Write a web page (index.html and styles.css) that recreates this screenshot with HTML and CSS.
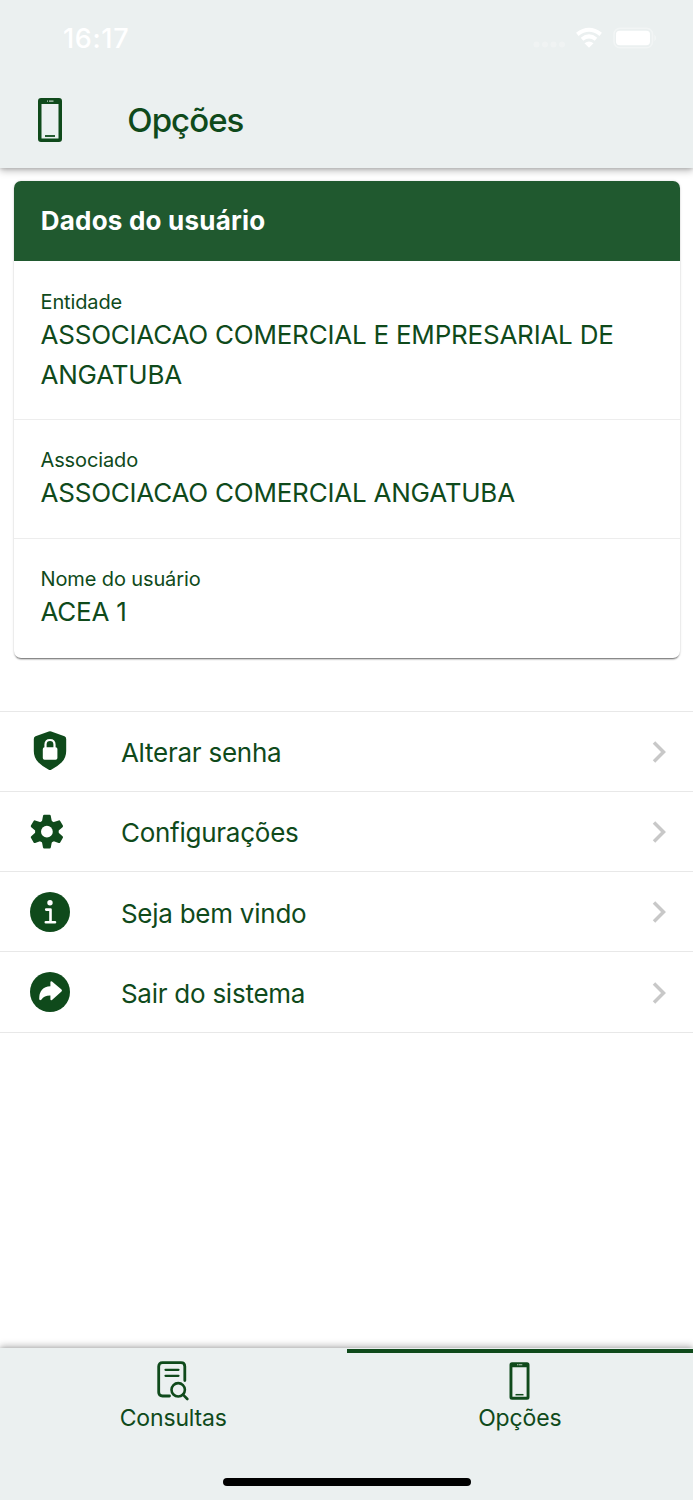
FILE: index.html
```html
<!DOCTYPE html>
<html lang="pt-BR">
<head>
<meta charset="utf-8">
<title>Opções</title>
<link rel="stylesheet" href="styles.css">
</head>
<body>
<div class="screen">
  <header class="header">
    <div class="status">
      <span class="clock">16:17</span>
      <svg class="status-icons" width="126" height="24" viewBox="0 0 126 24" fill="#fff">
        <g opacity=".25"><circle cx="6.500" cy="18.500" r="3"/><circle cx="15" cy="18.500" r="3"/><circle cx="23.500" cy="18.500" r="3"/><circle cx="32" cy="18.500" r="3"/></g>
        <g fill="none" stroke="#fff" stroke-width="4"><path d="M47.300 8.400Q59 -.8 70.700 8.400"/><path d="M52 13.200Q59 7.600 66 13.200"/></g>
        <path d="M54.500 17.200Q59 13.600 63.500 17.200L59 21.800Z"/>
        <rect x="84" y="2.300" width="38.500" height="19.400" rx="6" fill="none" stroke="#fff" stroke-width="1.600" opacity=".35"/>
        <rect x="86" y="4.800" width="34" height="14.400" rx="3.600"/>
        <path d="M124.500 8.500q3 3.500 0 7z" opacity=".4"/>
      </svg>
    </div>
    <div class="toolbar">
      <svg class="phone" width="24" height="44" viewBox="0 0 24 44"><path fill="#0f4a1b" fill-rule="evenodd" d="M3 0H21Q24 0 24 3V41Q24 44 21 44H3Q0 44 0 41V3Q0 0 3 0ZM3.500 6V40.500H20.500V6Z"/><path d="M7 38H17" stroke="#0f4a1b" stroke-width="1.800"/><path d="M9 3.200H10M11 3.200H15.500" stroke="#b9cbbd" stroke-width="1.300"/></svg>
      <h1 class="title">Opções</h1>
    </div>
  </header>

  <main class="content">
    <section class="card">
      <h2 class="card-title">Dados do usuário</h2>
      <div class="field field-tall"><div class="label">Entidade</div><div class="value">ASSOCIACAO COMERCIAL E EMPRESARIAL DE<br>ANGATUBA</div></div>
      <div class="field"><div class="label">Associado</div><div class="value">ASSOCIACAO COMERCIAL ANGATUBA</div></div>
      <div class="field"><div class="label">Nome do usuário</div><div class="value">ACEA 1</div></div>
    </section>

    <nav class="menu">
      <a class="row">
        <svg class="icon" width="40" height="40" viewBox="0 0 40 40"><path fill="#0f4a1b" d="M18.800.5Q20 0 21.200.5L34.500 5.200Q36.200 6 36.200 8V20Q36.200 27 31.500 31.500Q27.500 35.500 21.200 38.700Q20 39.300 18.800 38.700Q12.500 35.500 8.500 31.500Q3.800 27 3.800 20V8Q3.800 6 5.500 5.200Z"/><path d="M15.500 18V13.500Q15.500 9 20 9T24.500 13.500V18" fill="none" stroke="#fff" stroke-width="2.200"/><rect x="12.800" y="16.300" width="14.600" height="12.500" rx="1.800" fill="#fff"/></svg>
        <span class="name">Alterar senha</span><svg class="chevron" width="14" height="22" viewBox="0 0 14 22"><path d="M2 1.500L11.500 11L2 20.500"/></svg>
      </a>
      <a class="row">
        <svg class="icon" width="40" height="40" viewBox="0 0 40 40"><g transform="translate(16.900 20.700)"><g fill="#0f4a1b"><circle r="11.800"/><path id="tooth" d="M-5 -10L-3.900 -15.800Q-3.700 -16.900 -2.700 -16.900H2.700Q3.700 -16.900 3.900 -15.800L5 -10Z"/><use href="#tooth" transform="rotate(60)"/><use href="#tooth" transform="rotate(120)"/><use href="#tooth" transform="rotate(180)"/><use href="#tooth" transform="rotate(240)"/><use href="#tooth" transform="rotate(300)"/></g><circle r="5.900" fill="#fff"/></g></svg>
        <span class="name">Configurações</span><svg class="chevron" width="14" height="22" viewBox="0 0 14 22"><path d="M2 1.500L11.500 11L2 20.500"/></svg>
      </a>
      <a class="row">
        <svg class="icon" width="40" height="40" viewBox="0 0 40 40"><circle cx="20" cy="20" r="20" fill="#0f4a1b"/><circle cx="20" cy="10.700" r="2.700" fill="#fff"/><path d="M16.200 17.600H20.500V30M15.800 30.200H25" fill="none" stroke="#fff" stroke-width="2.600" stroke-linecap="round" stroke-linejoin="round"/></svg>
        <span class="name">Seja bem vindo</span><svg class="chevron" width="14" height="22" viewBox="0 0 14 22"><path d="M2 1.500L11.500 11L2 20.500"/></svg>
      </a>
      <a class="row">
        <svg class="icon" width="40" height="40" viewBox="0 0 40 40"><circle cx="20" cy="20" r="20" fill="#0f4a1b"/><path d="M20.400 14.200V10.300Q20.500 8.700 22 9.500L31.500 17.400Q32.500 18.500 31.500 19.500L22 28Q20.500 28.800 20.400 27.300V23.500Q14.500 23.300 11.300 27.700Q9.300 29 9.200 26.800Q9.200 14.800 20.400 14.200Z" fill="#fff"/></svg>
        <span class="name">Sair do sistema</span><svg class="chevron" width="14" height="22" viewBox="0 0 14 22"><path d="M2 1.500L11.500 11L2 20.500"/></svg>
      </a>
    </nav>
  </main>

  <footer class="footer">
    <div class="tabs">
      <a class="tab">
        <svg width="32" height="40" viewBox="0 0 32 40" fill="none" stroke="#0f4a1b" stroke-linecap="round"><path stroke-width="2.800" d="M12.500 35H5.500Q1.700 35 1.700 31.200V5.500Q1.700 1.700 5.500 1.700H24Q27.800 1.700 27.800 5.500V19.500"/><path stroke-width="2.200" d="M8.500 8.800H21.500M8.500 14.800H21.500"/><circle cx="21.200" cy="28.800" r="6.700" stroke-width="2.600"/><path stroke-width="2.600" d="M26 33.700L30.300 38"/></svg>
        <span class="tab-name">Consultas</span>
      </a>
      <a class="tab active">
        <svg width="21" height="40" viewBox="0 0 21 40"><path fill="#0f4a1b" fill-rule="evenodd" d="M3 1.300H18Q20.500 1.300 20.500 3.800V36.200Q20.500 38.700 18 38.700H3Q.5 38.700.5 36.200V3.800Q.5 1.300 3 1.300ZM3.400 6.300V35.700H17.600V6.300Z"/><path d="M6.500 33.700H14.500" stroke="#0f4a1b" stroke-width="1.500"/><path d="M8 3.800H9M9.500 3.800H13.300" stroke="#b9cbbd" stroke-width="1.100"/></svg>
        <span class="tab-name">Opções</span>
      </a>
    </div>
    <div class="home-bar"></div>
  </footer>
</div>
</body>
</html>
```
FILE: styles.css
```css
* { box-sizing: border-box; }
body { margin: 0; background: #fff; color: #0f4a1b; font-family: Inter, "Liberation Sans", sans-serif; }
h1, h2 { margin: 0; }
svg { display: block; flex: none; }
.screen { height: 1500px; display: flex; flex-direction: column; overflow: hidden; }
.header { height: 168px; flex: none; background: #ebf0f0; box-shadow: 0 1px 3px rgba(0,0,0,.12), 0 3px 7px rgba(0,0,0,.26); }
.status { height: 76px; padding: 0 37px 0 63px; display: flex; justify-content: space-between; align-items: center; color: #fff; }
.clock { font-size: 27px; font-weight: 500; letter-spacing: .65px; }
.toolbar { height: 88px; padding-left: 38.300px; display: flex; align-items: center; gap: 65px; }
.title { font-size: 33px; line-height: 40px; font-weight: 500; letter-spacing: -.95px; }
.content { flex: 1; }
.card { margin: 13px 13.500px 0 13.500px; height: 477px; border-radius: 7px; overflow: hidden; background: #fff; box-shadow: 0 2px 2px -1px rgba(0,0,0,.6), 0 0 3px rgba(0,0,0,.13); }
.card-title { height: 80px; padding-left: 27.300px; line-height: 80px; background: #20592f; color: #fff; font-size: 26px; font-weight: 700; letter-spacing: .21px; }
.field { height: 119px; padding: 26.500px 0 0 27px; border-top: 1px solid #ededed; }
.field-tall { height: 158.400px; border-top-color: #fff; }
.label { font-size: 20px; line-height: 26px; letter-spacing: -.12px; }
.value { font-size: 26px; line-height: 40px; letter-spacing: -.22px; white-space: nowrap; }
.menu { margin-top: 52.500px; border-bottom: 1px solid #e8e8e8; }
.row { height: 80.300px; padding: 1px 27.500px 0 30.400px; border-top: 1px solid #e8e8e8; display: flex; align-items: center; }
.icon { margin-top: -1px; }
.name { flex: 1; margin-left: 50.500px; padding-top: 3px; font-size: 26px; line-height: 32px; letter-spacing: -.25px; }
.chevron { fill: none; stroke: #c8c8c8; stroke-width: 3.500; }
.footer { height: 152px; flex: none; background: #ebf0f0; box-shadow: 0 0 3px rgba(0,0,0,.12), 0 -2px 7px rgba(0,0,0,.28); display: flex; flex-direction: column; justify-content: space-between; align-items: center; padding: 1px 0 14px; }
.tabs { width: 100%; display: flex; height: 100px; }
.tab { flex: 1; padding-top: 8px; border-top: 4px solid transparent; display: flex; flex-direction: column; align-items: center; gap: 2px; }
.active { border-top-color: #0f4a1b; }
.tab-name { font-size: 23px; line-height: 30px; letter-spacing: -.15px; }
.home-bar { width: 248px; height: 8.500px; border-radius: 5px; background: #000; }
```
